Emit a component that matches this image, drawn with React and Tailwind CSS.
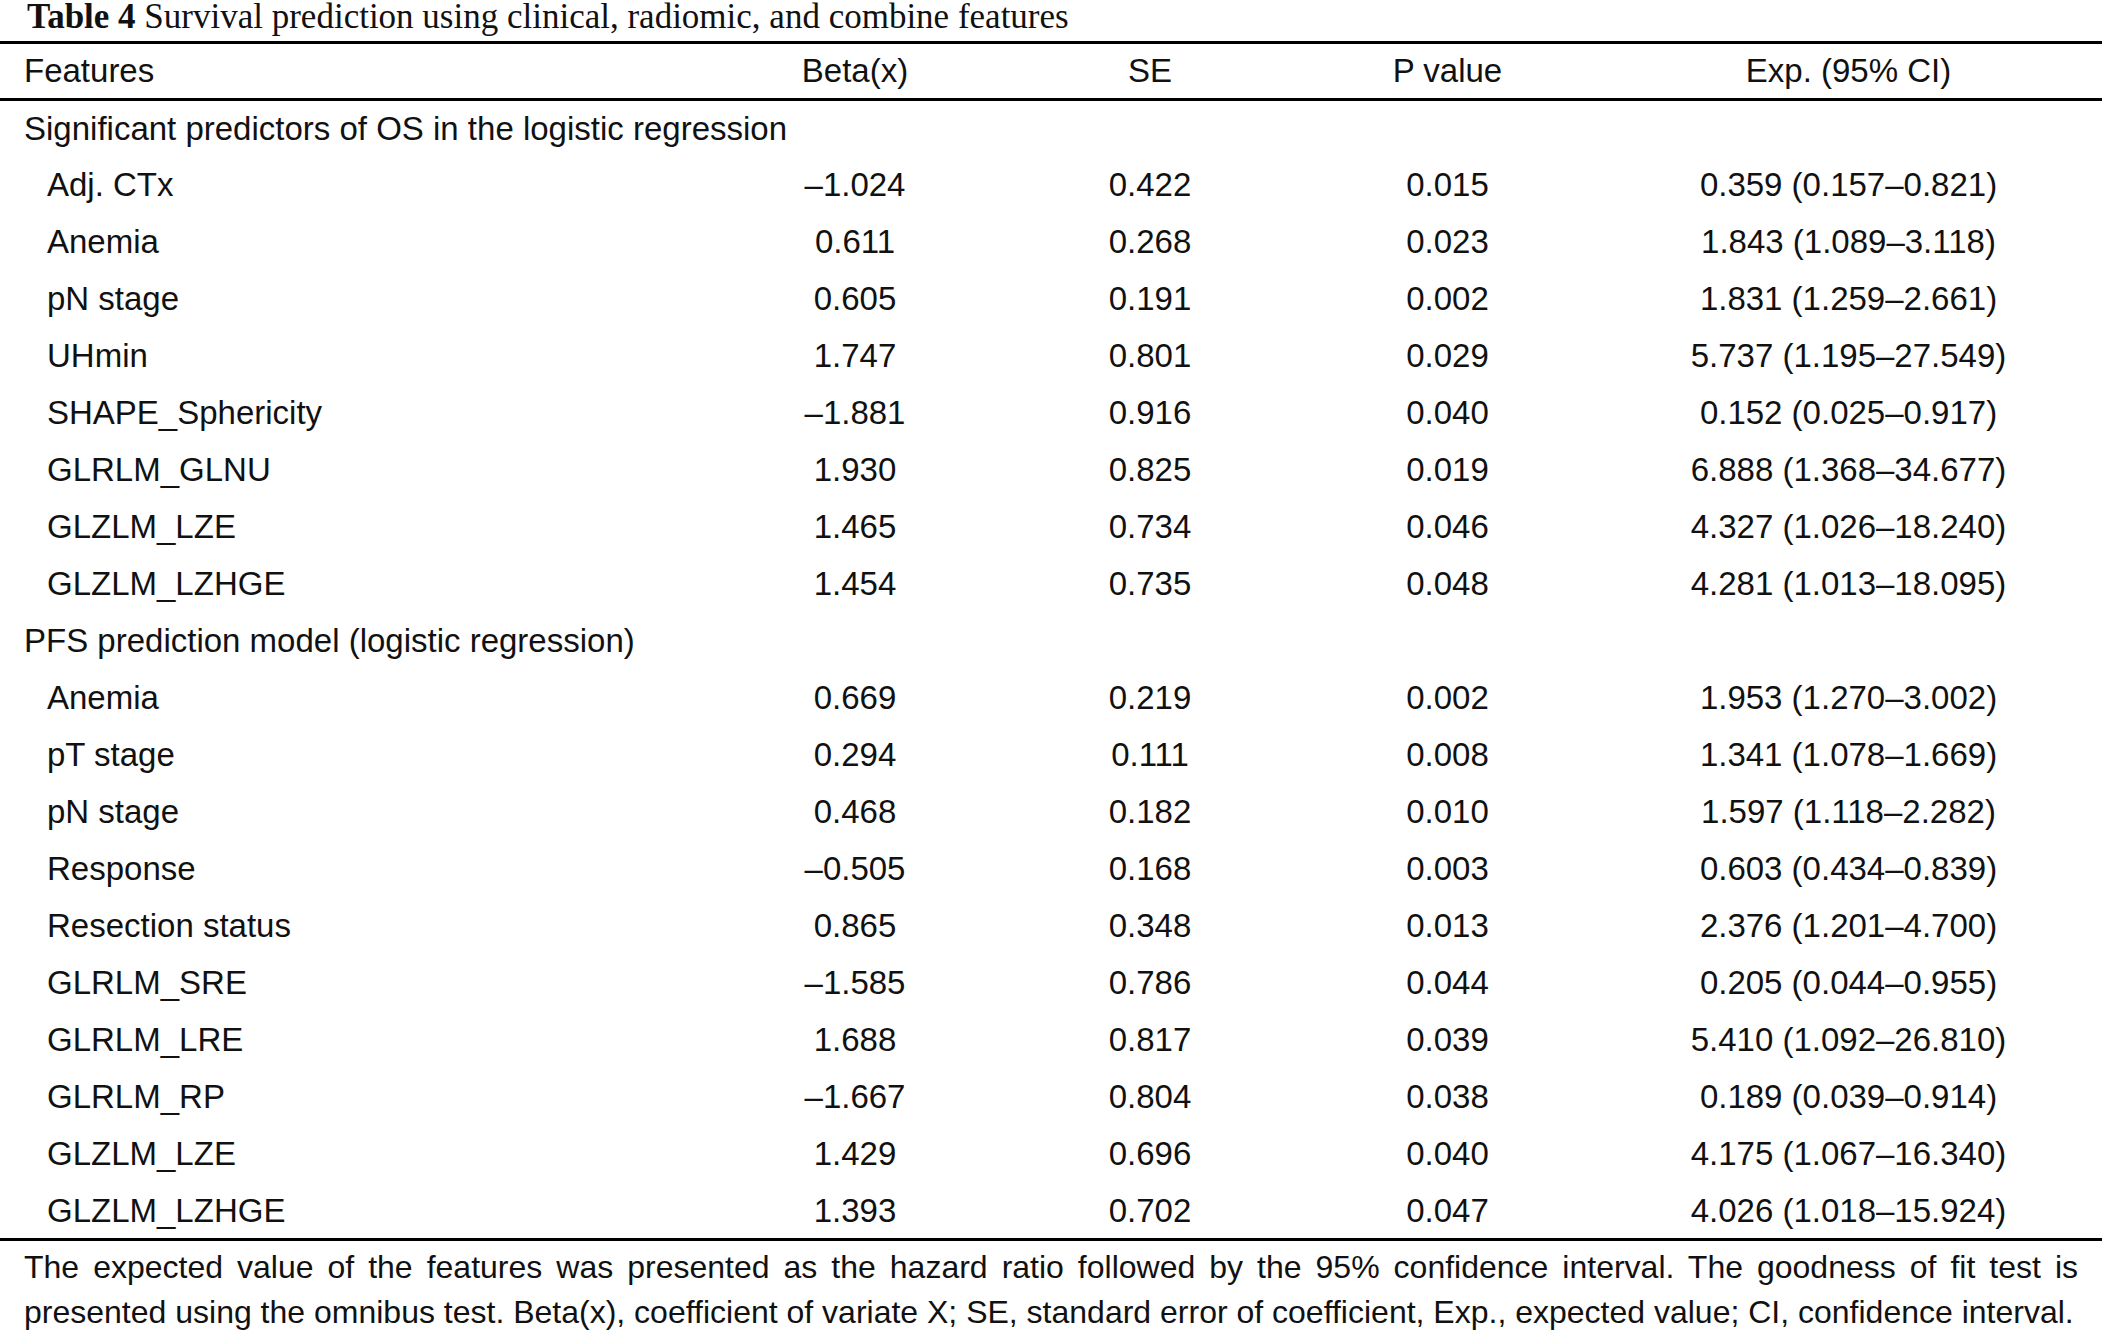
const os = [
  ['Adj. CTx', '–1.024', '0.422', '0.015', '0.359 (0.157–0.821)'],
  ['Anemia', '0.611', '0.268', '0.023', '1.843 (1.089–3.118)'],
  ['pN stage', '0.605', '0.191', '0.002', '1.831 (1.259–2.661)'],
  ['UHmin', '1.747', '0.801', '0.029', '5.737 (1.195–27.549)'],
  ['SHAPE_Sphericity', '–1.881', '0.916', '0.040', '0.152 (0.025–0.917)'],
  ['GLRLM_GLNU', '1.930', '0.825', '0.019', '6.888 (1.368–34.677)'],
  ['GLZLM_LZE', '1.465', '0.734', '0.046', '4.327 (1.026–18.240)'],
  ['GLZLM_LZHGE', '1.454', '0.735', '0.048', '4.281 (1.013–18.095)'],
];

const pfs = [
  ['Anemia', '0.669', '0.219', '0.002', '1.953 (1.270–3.002)'],
  ['pT stage', '0.294', '0.111', '0.008', '1.341 (1.078–1.669)'],
  ['pN stage', '0.468', '0.182', '0.010', '1.597 (1.118–2.282)'],
  ['Response', '–0.505', '0.168', '0.003', '0.603 (0.434–0.839)'],
  ['Resection status', '0.865', '0.348', '0.013', '2.376 (1.201–4.700)'],
  ['GLRLM_SRE', '–1.585', '0.786', '0.044', '0.205 (0.044–0.955)'],
  ['GLRLM_LRE', '1.688', '0.817', '0.039', '5.410 (1.092–26.810)'],
  ['GLRLM_RP', '–1.667', '0.804', '0.038', '0.189 (0.039–0.914)'],
  ['GLZLM_LZE', '1.429', '0.696', '0.040', '4.175 (1.067–16.340)'],
  ['GLZLM_LZHGE', '1.393', '0.702', '0.047', '4.026 (1.018–15.924)'],
];

const Section = ({ label }) => (
  <tr className="h-[57px]">
    <td colSpan={5} className="pl-[24px] whitespace-nowrap">{label}</td>
  </tr>
);

const Row = ({ cells, last }) => (
  <tr className={last ? 'h-[57px] border-b-[3px] border-black' : 'h-[57px]'}>
    <td className="pl-[47px] whitespace-nowrap">{cells[0]}</td>
    {cells.slice(1).map((c, i) => (
      <td key={i} className="text-center whitespace-nowrap">{c}</td>
    ))}
  </tr>
);

export default function App() {
  return (
    <div className="w-[2102px] bg-white text-[#111] font-['Liberation_Sans',Arial,sans-serif] text-[33px]">
      <div className="h-[41px] pl-[27px] font-['Liberation_Serif',serif] text-[35px] leading-[34px] whitespace-nowrap">
        <span className="font-bold">Table 4</span> Survival prediction using clinical, radiomic, and combine features
      </div>
      <table className="w-full table-fixed border-collapse">
        <colgroup>
          <col className="w-[710px]" />
          <col className="w-[290px]" />
          <col className="w-[300px]" />
          <col className="w-[295px]" />
          <col />
        </colgroup>
        <thead>
          <tr className="h-[57px] border-t-[3px] border-b-[3px] border-black">
            <th className="pl-[24px] text-left font-normal">Features</th>
            <th className="text-center font-normal">Beta(x)</th>
            <th className="text-center font-normal">SE</th>
            <th className="text-center font-normal">P value</th>
            <th className="text-center font-normal">Exp. (95% CI)</th>
          </tr>
        </thead>
        <tbody>
          <Section label="Significant predictors of OS in the logistic regression" />
          {os.map((r, i) => (
            <Row key={'o' + i} cells={r} />
          ))}
          <Section label="PFS prediction model (logistic regression)" />
          {pfs.map((r, i) => (
            <Row key={'p' + i} cells={r} last={i === pfs.length - 1} />
          ))}
        </tbody>
      </table>
      <div className="px-[24px] pt-[4px] text-[32px] leading-[45px]">
        <p className="text-justify [text-align-last:justify]">
          The expected value of the features was presented as the hazard ratio followed by the 95% confidence interval. The goodness of fit test is
        </p>
        <p className="whitespace-nowrap">
          presented using the omnibus test. Beta(x), coefficient of variate X; SE, standard error of coefficient, Exp., expected value; CI, confidence interval.
        </p>
      </div>
    </div>
  );
}
